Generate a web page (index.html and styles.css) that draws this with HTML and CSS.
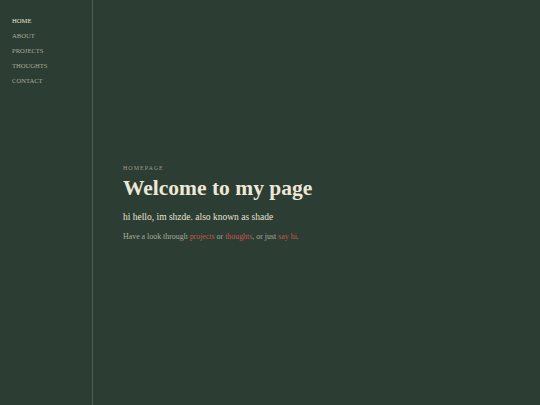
FILE: index.html
```html
<!DOCTYPE html>
<html>
<head>
<meta charset="utf-8">
<link rel="stylesheet" href="styles.css">
</head>
<body>
<div class="layout">
  <nav class="sidebar">
    <a class="nav-item active" href="#">Home</a>
    <a class="nav-item" href="#">About</a>
    <a class="nav-item" href="#">Projects</a>
    <a class="nav-item" href="#">Thoughts</a>
    <a class="nav-item" href="#">Contact</a>
  </nav>
  <main class="main">
    <div class="intro">
      <div class="eyebrow">Homepage</div>
      <h1 class="title">Welcome to my page</h1>
      <p class="lead">hi hello, im shzde. also known as shade</p>
      <p class="text">Have a look through <a href="#">projects</a> or <a href="#">thoughts</a>, or just <a href="#">say hi</a>.</p>
    </div>
  </main>
</div>
</body>
</html>
```
FILE: styles.css
```css
html, body {
  margin: 0;
  padding: 0;
  height: 100%;
  background: #2c3d33;
  font-family: "Liberation Serif", "DejaVu Serif", serif;
}
.layout {
  display: flex;
  height: 100%;
}
.sidebar {
  width: 93px;
  flex-shrink: 0;
  border-right: 1px solid #4f5f54;
  display: flex;
  flex-direction: column;
  gap: 6px;
  padding: 16px 0 0 12px;
  box-sizing: border-box;
}
.nav-item {
  font-size: 6.6px;
  line-height: 9px;
  text-transform: uppercase;
  letter-spacing: 0;
  color: #a9ab9a;
  text-decoration: none;
}
.nav-item.active {
  color: #e6e2d3;
}
.main {
  flex: 1;
  display: flex;
  align-items: center;
  padding-left: 30px;
}
.eyebrow {
  font-size: 6px;
  letter-spacing: 1px;
  text-transform: uppercase;
  color: #9a9c8c;
  margin-bottom: 4px;
}
.title {
  font-size: 21.5px;
  font-weight: bold;
  color: #ede8d6;
  margin: 0 0 11px;
  line-height: 26px;
}
.lead {
  font-size: 9.5px;
  color: #e6e2d3;
  margin: 0 0 10px;
}
.text {
  font-size: 7.9px;
  color: #a9ab9a;
  margin: 0;
}
.text a {
  color: #c4584c;
  text-decoration: none;
}
```
